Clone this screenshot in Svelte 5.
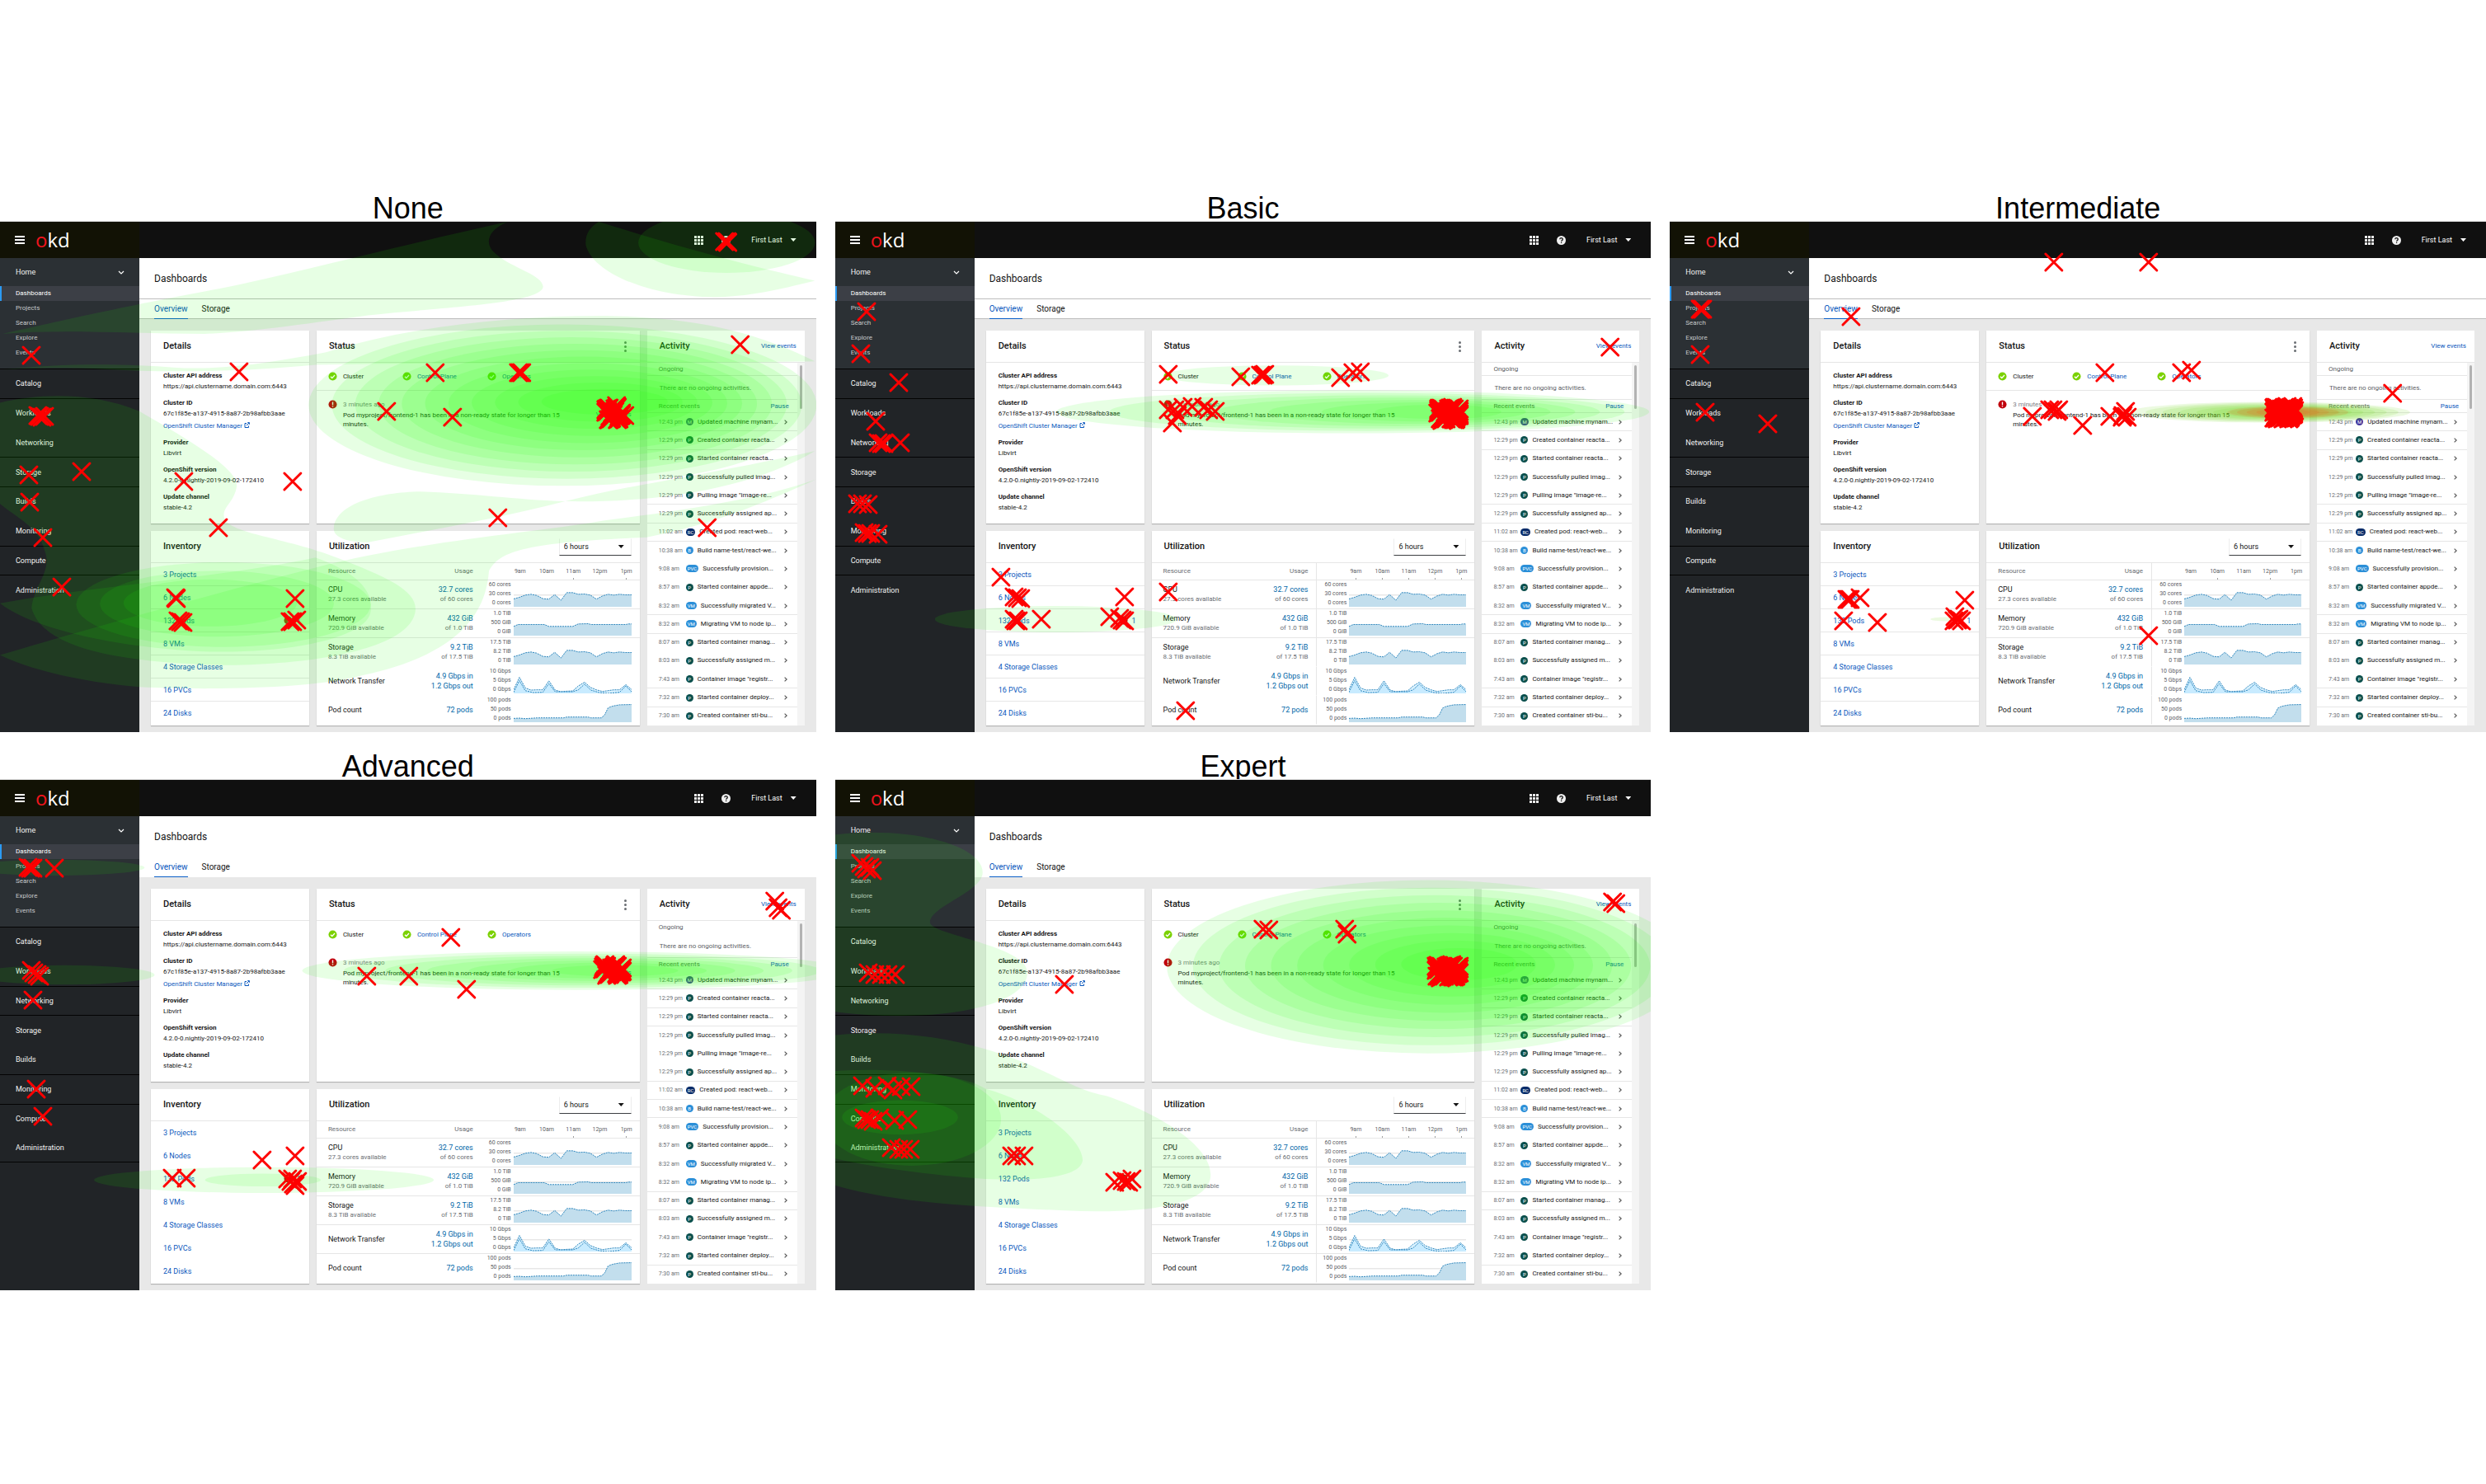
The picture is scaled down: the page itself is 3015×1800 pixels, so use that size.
<script>
  const PANEL_W = 990;
  const PANEL_H = 619;

  const subNav = ['Dashboards', 'Projects', 'Search', 'Explore', 'Events'];
  const nav = ['Catalog', 'Workloads', 'Networking', 'Storage', 'Builds', 'Monitoring', 'Compute', 'Administration'];

  const details = [
    { label: 'Cluster API address', value: 'https://api.clustername.domain.com:6443' },
    { label: 'Cluster ID', value: '67c1f85e-a137-4915-8a87-2b98afbb3aae', link: 'OpenShift Cluster Manager' },
    { label: 'Provider', value: 'Libvirt' },
    { label: 'OpenShift version', value: '4.2.0-0.nightly-2019-09-02-172410' },
    { label: 'Update channel', value: 'stable-4.2' }
  ];

  const inventory = ['3 Projects', '6 Nodes', '132 Pods', '8 VMs', '4 Storage Classes', '16 PVCs', '24 Disks'];
  const hours = ['9am', '10am', '11am', '12pm', '1pm'];

  const wave = '0,68 21,62 42,54 63,51 83,55 106,67 128,69 149,52 172,73 193,45 215,45 235,51 258,50 279,54 301,69 323,57 343,51 364,54 385,51 406,53 429,53';
  const usage = [
    { name: 'CPU', sub: '27.3 cores available', top: '32.7 cores', bottom: 'of 60 cores', axis: ['60 cores', '30 cores', '0 cores'], lines: [wave], tone: 'solid' },
    { name: 'Memory', sub: '720.9 GiB available', top: '432 GiB', bottom: 'of 1.0 TiB', axis: ['1.0 TiB', '500 GiB', '0 GiB'], lines: ['0,63 16,56 111,56 128,63 215,63 235,54 271,53 281,56 409,56 416,54 429,54'], tone: 'solid' },
    { name: 'Storage', sub: '8.3 TiB available', top: '9.2 TiB', bottom: 'of 17.5 TiB', axis: ['17.5 TiB', '8.2 TiB', '0 TiB'], lines: [wave], tone: 'solid' },
    {
      name: 'Network Transfer', top: '4.9 Gbps in', bottom: '1.2 Gbps out', both: true, axis: ['10 Gbps', '5 Gbps', '0 Gbps'], tone: 'pale',
      lines: [
        '0,83 21,38 42,77 63,85 83,84 106,84 128,51 151,85 172,91 193,89 215,88 235,70 258,56 279,75 301,84 323,90 364,84 385,84 408,65 429,83',
        '0,93 21,50 42,87 71,94 106,93 128,61 151,91 215,91 235,84 258,63 281,85 311,94 343,97 385,93 408,70 429,91'
      ]
    },
    { name: 'Pod count', top: '72 pods', axis: ['100 pods', '50 pods', '0 pods'], lines: ['0,83 21,82 42,84 86,81 181,81 193,78 271,78 281,81 319,81 331,70 343,45 353,40 364,37 385,33 429,32'], tone: 'solid' }
  ];

  const events = [
    ['12:43 pm', 'M', 'machine', 'Updated machine mynam...'],
    ['12:29 pm', 'P', 'pod', 'Created container reacta...'],
    ['12:29 pm', 'P', 'pod', 'Started container reacta...'],
    ['12:29 pm', 'P', 'pod', 'Successfully pulled imag...'],
    ['12:29 pm', 'P', 'pod', 'Pulling image "image-re...'],
    ['12:29 pm', 'P', 'pod', 'Successfully assigned ap...'],
    ['11:02 am', 'RC', 'controller', 'Created pod: react-web...'],
    ['10:38 am', 'B', 'build', 'Build name-test/react-we...'],
    ['9:08 am', 'PVC', 'build', 'Successfully provision...'],
    ['8:57 am', 'P', 'pod', 'Started container appde...'],
    ['8:32 am', 'VM', 'build', 'Successfully migrated V...'],
    ['8:32 am', 'VM', 'build', 'Migrating VM to node ip...'],
    ['8:07 am', 'P', 'pod', 'Started container manag...'],
    ['8:03 am', 'P', 'pod', 'Successfully assigned m...'],
    ['7:43 am', 'P', 'pod', 'Container image "registr...'],
    ['7:32 am', 'P', 'pod', 'Started container deploy...'],
    ['7:30 am', 'P', 'pod', 'Created container sti-bu...']
  ];

  // A stack of nested ellipses, from the outermost [cx, cy, rx, ry] to the innermost.
  function rings(from, to, n, tone = 'green') {
    return Array.from({ length: n }, (_, i) => {
      const t = n === 1 ? 0 : i / (n - 1);
      const [cx, cy, rx, ry] = from.map((v, k) => v + (to[k] - v) * t);
      return { cx, cy, rx, ry, tone };
    });
  }

  // A dense knot of clicks spread over a box around its centre.
  function knot(cx, cy, rx, ry, n) {
    return Array.from({ length: n }, (_, i) => {
      const u = ((i * 0.618034 + 0.13) % 1) * 2 - 1;
      const v = ((i * 0.754878 + 0.37) % 1) * 2 - 1;
      return [cx + u * rx, cy + v * ry];
    });
  }

  const upper = { nav: [0, 1, 3, 4, 6, 7], events: [0, 1, 4, 5, 6, 10, 11, 14, 15], lower: false };
  const lower = { nav: [0, 2, 3, 5, 6, 8], events: [0, 1, 2, 5, 6, 7, 11, 12, 15], lower: true };

  const boards = [
    {
      title: 'None', ...upper, divider: false, ticks: [2, 4],
      view: [0, 22, 1552, 1517],
      paths: [
        'M5 355C90 325 260 265 420 220C560 175 740 100 965 22C925 50 920 90 945 120C975 160 1032 180 1033 215C1030 265 850 275 700 300C560 330 470 350 390 355C250 355 120 340 5 355Z',
        'M1139 22C1120 40 1113 60 1114 90C1125 170 1230 245 1360 246C1440 243 1500 215 1550 197C1460 165 1340 120 1139 22Z',
        'M5 462C120 440 250 445 330 455C420 465 520 440 620 410C760 340 950 302 1140 302C1320 303 1440 350 1550 437C1300 442 900 440 600 447C450 470 300 470 200 460C130 455 60 455 5 462Z',
        'M635 930C640 860 720 826 800 824C900 829 980 848 1075 853C1250 858 1430 815 1550 703C1350 773 1200 803 1075 853C950 903 820 938 700 975C660 975 632 960 635 930Z',
        'M0 560C80 530 180 530 265 585C370 680 455 760 450 810C445 860 420 870 427 905C440 950 540 960 640 1020C740 1080 795 1120 790 1180C780 1290 600 1340 420 1340C200 1330 80 1280 60 1170C65 1100 100 1060 85 1000C75 930 30 900 0 860Z',
        'M0 1310C150 1240 400 1130 600 1050C800 970 1000 950 1150 910C1300 880 1450 845 1552 788C1450 860 1350 925 1230 960C1000 975 950 1000 930 1060C925 1150 900 1300 690 1370C600 1410 400 1415 265 1405C150 1390 50 1350 0 1310Z',
        'M0 1156C200 1100 420 1080 600 1020C690 1070 710 1130 705 1180C700 1255 560 1305 400 1300C220 1290 60 1230 0 1156Z'
      ],
      rings: [
        ...rings([1382, 84, 168, 90], [1382, 84, 168, 90], 1),
        ...rings([1070, 567, 483, 240], [1150, 557, 120, 38], 11),
        ...rings([425, 1160, 280, 126], [400, 1155, 165, 70], 3)
      ],
      marks: [
        [59, 418], [72, 598], [76, 600], [85, 600], [80, 602], [55, 774], [155, 765], [57, 855], [81, 960], [117, 1108],
        [455, 469], [350, 794], [557, 794], [415, 932], [334, 1140], [336, 1142], [562, 1141], [338, 1207], [343, 1210], [348, 1212],
        [552, 1210], [557, 1211], [565, 1206], [828, 470], [986, 471], [989, 471], [992, 471], [735, 585], [860, 604], [947, 901],
        [1378, 82], [1382, 80], [1384, 84], [1408, 388], [1345, 931], [1188, 597], ...knot(1167, 590, 16, 21, 32)
      ]
    },
    {
      title: 'Basic', ...upper, divider: true, ticks: [0, 1, 2, 3, 4],
      view: [5, 113, 1550, 1428],
      paths: [],
      rings: [
        ...rings([424, 1225, 230, 37], [424, 1225, 230, 37], 1),
        ...rings([842, 543, 214, 28], [842, 543, 214, 28], 1),
        ...rings([988, 645, 563, 60], [1150, 645, 120, 20], 7)
      ],
      marks: [
        [64, 364], [53, 482], [126, 562], [82, 671], [86, 732], [92, 733], [98, 733], [129, 732], [47, 903], [57, 903], [67, 905],
        [60, 982], [66, 985], [72, 984], [86, 988], [637, 540], [775, 546], [813, 542], [817, 542], [820, 540], [964, 548], [988, 535],
        [1002, 534], [1476, 463], [637, 640], [650, 640], [655, 655], [645, 675], [665, 632], [683, 630], [705, 632], [715, 640],
        [727, 644], [320, 1107], [344, 1163], [351, 1165], [357, 1168], [554, 1162], [344, 1226], [348, 1230], [353, 1229],
        [397, 1225], [527, 1218], [545, 1222], [550, 1228], [555, 1230], [637, 1148], [671, 1482], ...knot(1170, 650, 21, 18, 60)
      ]
    },
    {
      title: 'Intermediate', ...upper, divider: true, ticks: [1, 3],
      view: [16, 113, 2969, 1428],
      paths: [],
      rings: [
        ...rings([2198, 646, 512, 29], [2255, 646, 200, 14], 7, 'lime'),
        ...rings([2265, 646, 220, 17], [2265, 646, 80, 8], 5, 'orange'),
        ...rings([1020, 1225, 55, 6], [1020, 1225, 55, 6], 1, 'lime')
      ],
      marks: [
        [1413, 226], [1759, 226], [126, 357], [130, 357], [136, 357], [126, 485], [676, 378], [146, 647], [372, 679], [662, 1170],
        [667, 1170], [672, 1170], [708, 1165], [1091, 1172], [648, 1230], [771, 1235], [1050, 1230], [1055, 1217], [1063, 1227],
        [1070, 1225], [1078, 1230], [1600, 536], [1878, 535], [1913, 529], [2645, 592], [1337, 657], [1400, 638], [1412, 640],
        [1425, 643], [1433, 640], [1517, 683], [1617, 657], [1662, 660], [1675, 643], [1665, 655], [1680, 660], [1759, 1270],
        ...knot(2250, 647, 38, 17, 80)
      ]
    },
    {
      title: 'Advanced', ...lower, divider: false, ticks: [2, 4],
      view: [0, 107, 1552, 1426],
      paths: [],
      rings: [
        ...rings([105, 352, 170, 22], [105, 352, 170, 22], 1),
        ...rings([122, 652, 172, 27], [122, 652, 172, 27], 1),
        ...rings([1095, 640, 520, 54], [1170, 640, 120, 16], 7),
        ...rings([502, 1225, 323, 36], [500, 1225, 110, 18], 2)
      ],
      marks: [
        [53, 352], [58, 353], [62, 353], [104, 354], [60, 640], [65, 645], [70, 650], [75, 655], [62, 723], [69, 970], [81, 1046],
        [698, 655], [777, 655], [888, 692], [858, 547], [1474, 446], [1480, 463], [1486, 470], [498, 1168], [562, 1157],
        [327, 1219], [354, 1219], [547, 1223], [553, 1230], [558, 1235], [562, 1240], [556, 1222], [566, 1228],
        ...knot(1165, 638, 19, 15, 45)
      ]
    },
    {
      title: 'Expert', ...lower, divider: true, ticks: [0, 1, 2, 3, 4],
      view: [5, 107, 1550, 1426],
      paths: [
        'M5 260C150 235 285 290 285 365C285 420 185 460 185 505C185 540 370 570 370 645C370 740 200 790 5 755Z',
        'M5 820C150 800 270 840 370 900C460 960 470 975 520 990C620 1040 720 1130 718 1212C716 1300 580 1320 440 1310C280 1300 120 1290 5 1240Z',
        'M5 920C120 910 250 930 290 970C390 1010 475 1110 475 1170C470 1220 380 1228 290 1222C180 1210 80 1190 5 1165Z'
      ],
      rings: [
        ...rings([1130, 629, 495, 242], [1190, 622, 110, 45], 10),
        ...rings([150, 1055, 170, 130], [128, 1050, 110, 48], 2)
      ],
      marks: [
        [54, 340], [60, 348], [65, 355], [70, 352], [75, 360], [68, 647], [80, 650], [92, 650], [105, 650], [119, 650], [441, 678],
        [817, 525], [828, 527], [973, 525], [978, 537], [1481, 448], [1487, 452], [57, 962], [80, 968], [103, 962], [115, 973],
        [130, 965], [149, 965], [60, 1052], [65, 1055], [70, 1055], [77, 1060], [90, 1052], [118, 1058], [142, 1056], [112, 1135],
        [125, 1138], [135, 1140], [148, 1140], [340, 1157], [350, 1157], [364, 1157], [535, 1232], [550, 1227], [558, 1228],
        [568, 1222], [562, 1232], ...knot(1168, 641, 23, 18, 70)
      ]
    }
  ];

  // Click positions go from the survey grid to panel pixels, so every cross keeps its square shape.
  function cross([x, y], [vx, vy, vw, vh]) {
    const px = Math.round(((x - vx) * PANEL_W) / vw);
    const py = Math.round(((y - vy) * PANEL_H) / vh);
    return `M${px - 10} ${py - 10}l20 20M${px + 10} ${py - 10}l-20 20`;
  }
</script>

{#snippet check()}
  <svg class="state" viewBox="0 0 12 12" aria-hidden="true">
    <circle cx="6" cy="6" r="5.5" fill="#7bd100" />
    <path d="M3.2 6.2l2 2 3.6-3.8" fill="none" stroke="#fff" stroke-width="1.4" />
  </svg>
{/snippet}

{#snippet alert()}
  <svg class="state" viewBox="0 0 12 12" aria-hidden="true">
    <circle cx="6" cy="6" r="5.5" fill="#c0000c" />
    <path d="M6 2.6v4.2M6 8v1.4" fill="none" stroke="#fff" stroke-width="1.5" />
  </svg>
{/snippet}

<main class="survey">
  {#each boards as board}
    <section class="board">
      <h1>{board.title}</h1>
      <div class="panel" class:plain={board.lower}>
        <header class="masthead">
          <div class="brand">
            <button class="burger" aria-label="Toggle navigation"><i></i><i></i><i></i></button>
            <span class="logo"><b>o</b>kd</span>
          </div>
          <div class="tools">
            <button aria-label="Applications">
              <svg width="11" height="11" viewBox="0 0 11 11">
                {#each [0, 4, 8] as gx}
                  {#each [0, 4, 8] as gy}
                    <rect x={gx} y={gy} width="3" height="3" fill="#f0f0f0" />
                  {/each}
                {/each}
              </svg>
            </button>
            <button aria-label="Help">
              <svg width="11" height="11" viewBox="0 0 12 12">
                <circle cx="6" cy="6" r="6" fill="#f0f0f0" />
                <path d="M4.1 4.6c0-2.4 3.8-2.4 3.8 0 0 1.4-1.8 1.3-1.8 2.8M6.1 8.4v1.4" fill="none" stroke="#111" stroke-width="1.4" />
              </svg>
            </button>
            <button class="user">First Last <span class="caret"></span></button>
          </div>
        </header>

        <div class="body">
          <nav aria-label="Main">
            <div class="home">
              <a class="section" href="#home">Home
                <svg width="8" height="5" viewBox="0 0 8 5" aria-hidden="true"><path d="M1 1l3 3 3-3" fill="none" stroke="#fff" stroke-width="1.2" /></svg>
              </a>
              {#each subNav as item, i}
                <a class="sub" class:active={i === 0} href="#{item}">{item}</a>
              {/each}
            </div>
            <div class="groups">
              {#each nav as item, i}
                <a class:ruled={board.nav.includes(i)} class:closed={i === 7 && board.nav.includes(8)} href="#{item}">{item}</a>
              {/each}
            </div>
          </nav>

          <div class="content">
            <h2>Dashboards</h2>
            <div class="tabs">
              <a class="current" href="#overview">Overview</a>
              <a href="#storage">Storage</a>
            </div>

            <div class="cards">
              <article class="card">
                <header><h3>Details</h3></header>
                <dl>
                  {#each details as d}
                    <div>
                      <dt>{d.label}</dt>
                      <dd>{d.value}</dd>
                      {#if d.link}
                        <dd class="more"><a href="#manager">{d.link}
                          <svg width="7" height="7" viewBox="0 0 7 7" aria-hidden="true"><path d="M3 1.5H1v5h4.5v-2M3 4L6.2.8M4.2.6h2.2v2.2" fill="none" stroke="currentColor" stroke-width="1" /></svg>
                        </a></dd>
                      {/if}
                    </div>
                  {/each}
                </dl>
              </article>

              <article class="card">
                <header>
                  <h3>Status</h3>
                  <button class="kebab" aria-label="Status actions"><i></i><i></i><i></i></button>
                </header>
                <div class="health">
                  <span>{@render check()}Cluster</span>
                  <a href="#control">{@render check()}<em>Control Plane</em></a>
                  <a href="#operators">{@render check()}<em>Operators</em></a>
                </div>
                <div class="alert">
                  {@render alert()}
                  <div class="message">
                    <time>3 minutes ago</time>
                    <p>Pod myproject/frontend-1 has been in a non-ready state for longer than 15 minutes.</p>
                  </div>
                  <a href="#details">View details</a>
                </div>
              </article>

              <article class="card activity">
                <header>
                  <h3>Activity</h3>
                  <a href="#events">View events</a>
                </header>
                <div class="feed">
                  <div class="list">
                    <h4 class="ongoing">Ongoing</h4>
                    <p class="empty">There are no ongoing activities.</p>
                    <div class="recent"><h4>Recent events</h4><a href="#pause">Pause</a></div>
                    <ul>
                      {#each events as [time, kind, tone, text], i}
                        <li class:ruled={board.events.includes(i)}>
                          <time>{time}</time>
                          <span class="badge {tone}">{kind}</span>
                          <span class="text">{text}</span>
                          <svg width="4" height="6" viewBox="0 0 4 6" aria-hidden="true"><path d="M.6.6L3.2 3 .6 5.4" fill="none" stroke="#555" stroke-width="1.2" /></svg>
                        </li>
                      {/each}
                    </ul>
                  </div>
                  <div class="track"><i></i></div>
                </div>
              </article>

              <article class="card">
                <header><h3>Inventory</h3></header>
                <ul class="inventory">
                  {#each inventory as item, i}
                    <li>
                      <a href="#{item}">{item}</a>
                      {#if i === 2}<a class="count" href="#errors">{@render alert()}1</a>{/if}
                    </li>
                  {/each}
                </ul>
              </article>

              <article class="card">
                <header>
                  <h3>Utilization</h3>
                  <label class="range">
                    <select aria-label="Time range"><option>6 hours</option></select>
                    <span class="caret"></span>
                  </label>
                </header>
                <table class:divided={board.divider}>
                  <thead>
                    <tr>
                      <th class="name">Resource</th>
                      <th class="used">Usage</th>
                      <th class="graph">
                        <div class="hours">
                          {#each hours as hour, i}
                            <span class:tick={board.ticks.includes(i)}>{hour}</span>
                          {/each}
                        </div>
                      </th>
                    </tr>
                  </thead>
                  <tbody>
                    {#each usage as row, i}
                      <tr class:open={!board.lower && i > 1}>
                        <td class="name">{row.name}{#if row.sub}<small>{row.sub}</small>{/if}</td>
                        <td class="used">
                          <a href="#{row.name}">{row.top}</a>
                          {#if row.bottom}<small class:linked={row.both}>{row.bottom}</small>{/if}
                        </td>
                        <td class="graph">
                          <div class="plot">
                            <div class="axis">{#each row.axis as a}<span>{a}</span>{/each}</div>
                            <svg viewBox="0 0 429 97" preserveAspectRatio="none" aria-hidden="true">
                              {#if i === 0 || board.lower}<path d="M0 54H429" class="mid" />{/if}
                              {#each row.lines as line}
                                <polygon points="0,97 {line} 429,97" class={row.tone} />
                                <polyline points={line} />
                              {/each}
                            </svg>
                          </div>
                        </td>
                      </tr>
                    {/each}
                  </tbody>
                </table>
              </article>
            </div>
          </div>
        </div>

        <svg class="overlay" viewBox={board.view.join(' ')} preserveAspectRatio="none" aria-hidden="true">
          {#each board.paths as d}<path class="green" {d} />{/each}
          {#each board.rings as r}<ellipse class={r.tone} cx={r.cx} cy={r.cy} rx={r.rx} ry={r.ry} />{/each}
        </svg>
        <svg class="overlay" viewBox="0 0 {PANEL_W} {PANEL_H}" preserveAspectRatio="none" aria-hidden="true">
          {#each board.marks as m}<path class="mark" d={cross(m, board.view)} />{/each}
        </svg>
      </div>
    </section>
  {/each}
</main>

<style>
  :global(body) {
    margin: 0;
    background: #fff;
  }
  .survey {
    display: grid;
    grid-template-columns: repeat(3, 1fr);
    column-gap: 23px;
    row-gap: 26px;
    padding-top: 237px;
    font: 8px/12px Roboto, 'Liberation Sans', sans-serif;
    color: #151515;
  }
  .survey * {
    box-sizing: border-box;
  }
  h1 {
    margin: 0;
    font: 36px/32px 'Liberation Sans', Arial, sans-serif;
    color: #000;
    text-align: center;
  }
  h2,
  h3,
  h4,
  p,
  ul,
  dl,
  dd {
    margin: 0;
    padding: 0;
  }
  ul {
    list-style: none;
  }
  a {
    color: #0a58bd;
    text-decoration: none;
  }
  button {
    padding: 0;
    border: 0;
    background: none;
    color: inherit;
    font: inherit;
  }
  .panel {
    position: relative;
    background: #fff;
    box-shadow: 0 -1px #d8d8d8;
  }
  .overlay {
    position: absolute;
    inset: 0;
    width: 100%;
    height: 100%;
    overflow: hidden;
    pointer-events: none;
  }
  .green {
    fill: rgba(32, 255, 0, 0.105);
  }
  .lime {
    fill: rgba(110, 220, 20, 0.13);
  }
  .orange {
    fill: rgba(240, 90, 20, 0.16);
  }
  .mark {
    fill: none;
    stroke: #fe0000;
    stroke-width: 3;
    stroke-linecap: round;
  }

  .masthead {
    display: flex;
    height: 44px;
    background: #101010;
    color: #fff;
  }
  .brand {
    display: flex;
    align-items: center;
    gap: 13px;
    width: 169px;
    padding-left: 18px;
    background: #121205;
  }
  .burger {
    display: grid;
    gap: 2px;
    width: 12px;
  }
  .burger i {
    height: 2px;
    background: #fff;
  }
  .logo {
    font: 24px/40px 'Open Sans', sans-serif;
  }
  .logo b {
    font-weight: 400;
    color: #f0141e;
  }
  .tools {
    display: flex;
    flex: 1;
    align-items: center;
    justify-content: flex-end;
    gap: 22px;
    padding-right: 24px;
  }
  .tools button {
    display: flex;
    align-items: center;
    gap: 10px;
  }
  .tools .user {
    margin-left: 3px;
    font-size: 9px;
  }
  .caret {
    width: 7px;
    height: 4px;
    background: currentColor;
    clip-path: polygon(0 0, 100% 0, 50% 100%);
  }

  .body {
    display: flex;
    height: 575px;
  }
  nav {
    width: 169px;
    background: #212427;
    font-size: 9px;
  }
  nav a {
    display: flex;
    align-items: center;
    padding-left: 19px;
    color: #f2f2f2;
  }
  .home {
    padding-bottom: 10px;
    background: #2b3034;
  }
  .home .section {
    justify-content: space-between;
    height: 34px;
    padding-right: 18px;
  }
  .home .sub {
    height: 18px;
    font-size: 8px;
    color: #c6c8ca;
  }
  .home .active {
    padding-left: 17px;
    border-left: 2px solid #2b9af3;
    background: #3c3f46;
    color: #fff;
  }
  .groups {
    display: grid;
    grid-auto-rows: 1fr;
    height: 286px;
  }
  .groups a {
    border-top: 1px solid transparent;
  }
  .groups .ruled {
    border-top-color: #030303;
  }
  .groups .closed {
    border-bottom: 1px solid #030303;
  }

  .content {
    display: flex;
    flex: 1;
    flex-direction: column;
    min-width: 0;
    background: #e8e8e8;
  }
  h2 {
    padding: 17px 18px 16px;
    border-bottom: 1px solid #bdbdbd;
    background: #fff;
    font-size: 12px;
    line-height: 16px;
    font-weight: 400;
  }
  .tabs {
    display: flex;
    gap: 17px;
    height: 24px;
    padding-left: 18px;
    border-bottom: 1px solid #bdbdbd;
    background: #fff;
    font-size: 10px;
    line-height: 24px;
  }
  .tabs a {
    height: 24px;
    color: #151515;
  }
  .tabs .current {
    border-bottom: 1px solid #0a5fc8;
    color: #0a58bd;
  }
  .plain h2,
  .plain .tabs {
    border-bottom-color: #fff;
  }
  .cards {
    display: grid;
    flex: 1;
    grid-template-columns: 192fr 392fr 191fr;
    grid-template-rows: 234px 1fr;
    gap: 9px;
    padding: 14px 14px 8px;
  }
  .card {
    display: flex;
    flex-direction: column;
    min-width: 0;
    min-height: 0;
    background: #fff;
    box-shadow: 0 1px 1px #b4b4b4;
  }
  .card > header {
    display: flex;
    align-items: center;
    justify-content: space-between;
    height: 39px;
    padding: 0 10px 0 15px;
    border-bottom: 1px solid #e6e6e6;
  }
  h3 {
    font-size: 11px;
    font-weight: 500;
    line-height: 14px;
  }
  dl {
    display: grid;
    gap: 7px;
    padding: 9px 15px;
    line-height: 13px;
  }
  dt {
    font-weight: 700;
  }
  .more {
    margin-top: 2px;
  }
  .kebab {
    display: grid;
    gap: 2px;
    width: 3px;
    margin-right: 6px;
  }
  .kebab i {
    width: 3px;
    height: 3px;
    border-radius: 50%;
    background: #6a6e73;
  }
  .state {
    width: 11px;
    height: 11px;
    margin-right: 7px;
    flex: none;
  }
  .health {
    display: flex;
    height: 34px;
    padding-left: 14px;
    border-bottom: 1px solid #e6e6e6;
  }
  .health > * {
    display: flex;
    align-items: center;
    width: 90px;
  }
  .health > a:nth-child(2) {
    width: 103px;
  }
  em {
    font-style: normal;
  }
  .alert {
    display: flex;
    padding: 11px 10px 0 14px;
    line-height: 11px;
  }
  .alert > a {
    margin-top: 12px;
    margin-left: auto;
  }
  .message {
    width: 284px;
  }
  .message time {
    display: block;
    margin-bottom: 2px;
    color: #7d8084;
  }

  .activity {
    grid-column: 3;
    grid-row: 1 / 3;
    box-shadow: none;
  }
  .feed {
    display: flex;
    flex: 1;
  }
  .list {
    display: flex;
    flex: 1;
    flex-direction: column;
  }
  .track {
    width: 9px;
    padding: 3px 3px 0;
    background: #f4f4f4;
  }
  .track i {
    display: block;
    width: 3px;
    height: 53px;
    border-radius: 2px;
    background: #b2b2b2;
  }
  h4 {
    font-size: 8px;
    font-weight: 400;
    color: #5c6065;
  }
  .ongoing {
    padding: 2px 14px 2px;
    line-height: 11px;
    border-bottom: 1px solid #e6e6e6;
  }
  .empty {
    height: 29px;
    padding-left: 15px;
    border-bottom: 1px solid #e6e6e6;
    line-height: 29px;
    color: #5c6065;
  }
  .recent {
    display: flex;
    justify-content: space-between;
    padding: 2px 10px 1px 14px;
    border-bottom: 1px solid #e6e6e6;
  }
  .plain .ongoing,
  .plain .recent,
  .plain .health,
  .plain .inventory li {
    border-bottom-color: #fff;
  }
  .list ul {
    display: grid;
    flex: 1;
    grid-auto-rows: 1fr;
  }
  .list li {
    display: flex;
    align-items: center;
    padding: 0 12px 0 14px;
    border-bottom: 1px solid transparent;
  }
  .list .ruled {
    border-bottom-color: #e6e6e6;
  }
  .list time {
    width: 33px;
    font-size: 7px;
    color: #6a6e73;
  }
  .badge {
    min-width: 9px;
    margin-right: 5px;
    padding: 0 2px;
    border-radius: 5px;
    font-size: 6px;
    line-height: 9px;
    text-align: center;
    color: #fff;
  }
  .machine {
    background: #40329a;
  }
  .pod {
    background: #0a4f4c;
  }
  .controller {
    background: #052a68;
  }
  .build {
    background: #2b8fd8;
  }
  .text {
    flex: 1;
    white-space: nowrap;
  }

  .inventory {
    display: grid;
    grid-auto-rows: 28px;
    font-size: 9px;
  }
  .inventory li {
    display: flex;
    align-items: center;
    justify-content: space-between;
    padding: 0 10px 0 15px;
    border-bottom: 1px solid #e6e6e6;
  }
  .inventory li:last-child {
    border-bottom: 0;
  }
  .count {
    display: flex;
    align-items: center;
  }
  .count .state {
    margin-right: 5px;
  }

  .range {
    display: flex;
    align-items: center;
    width: 88px;
    height: 21px;
    padding-right: 8px;
    border: 1px solid #ededed;
    border-top-color: #fff;
    border-bottom-color: #3c3f42;
  }
  select {
    flex: 1;
    padding: 0 0 0 5px;
    border: 0;
    appearance: none;
    background: none;
    color: inherit;
    font: 9px/18px Roboto, sans-serif;
  }
  table {
    width: 100%;
    table-layout: fixed;
    border-spacing: 0;
  }
  th,
  td {
    height: 35px;
    padding: 0;
    border-bottom: 1px solid #e6e6e6;
    font-size: 9px;
    font-weight: 400;
    text-align: left;
    vertical-align: middle;
  }
  th {
    height: 21px;
    font-size: 8px;
    color: #6a6e73;
  }
  .name {
    width: 28%;
    padding-left: 14px;
    white-space: nowrap;
  }
  .used {
    width: 23%;
    padding-right: 10px;
    text-align: right;
    white-space: nowrap;
  }
  .used a {
    color: #0066a8;
  }
  small {
    display: block;
    font-size: 8px;
    color: #6a6e73;
  }
  .used small.linked {
    font-size: 9px;
    color: #0066a8;
  }
  .divided .graph {
    border-left: 1px solid #e6e6e6;
  }
  .open td,
  tbody tr:last-child td {
    border-bottom-color: transparent;
  }
  .hours {
    display: flex;
    margin-left: 31px;
    font-size: 7px;
    line-height: 20px;
    text-align: center;
    color: #5c6065;
  }
  .hours span {
    flex: 1;
  }
  .tick {
    background: linear-gradient(#a0a0a0, #a0a0a0) bottom / 1px 2px no-repeat;
  }
  .plot {
    display: flex;
    gap: 3px;
    height: 34px;
    padding-right: 10px;
  }
  .axis {
    width: 36px;
    font-size: 7px;
    line-height: 11px;
    text-align: right;
    color: #5c6065;
  }
  .axis span {
    display: block;
  }
  .plot svg {
    flex: 1;
    width: 0;
    height: 32px;
  }
  .solid {
    fill: #c2deed;
  }
  .pale {
    fill: #bee7ff;
    fill-opacity: 0.6;
  }
  .mid {
    stroke: #dcdcdc;
    vector-effect: non-scaling-stroke;
  }
  polyline {
    fill: none;
    stroke: #2c86bd;
    stroke-width: 1;
    stroke-dasharray: 2 1;
    vector-effect: non-scaling-stroke;
  }
</style>
